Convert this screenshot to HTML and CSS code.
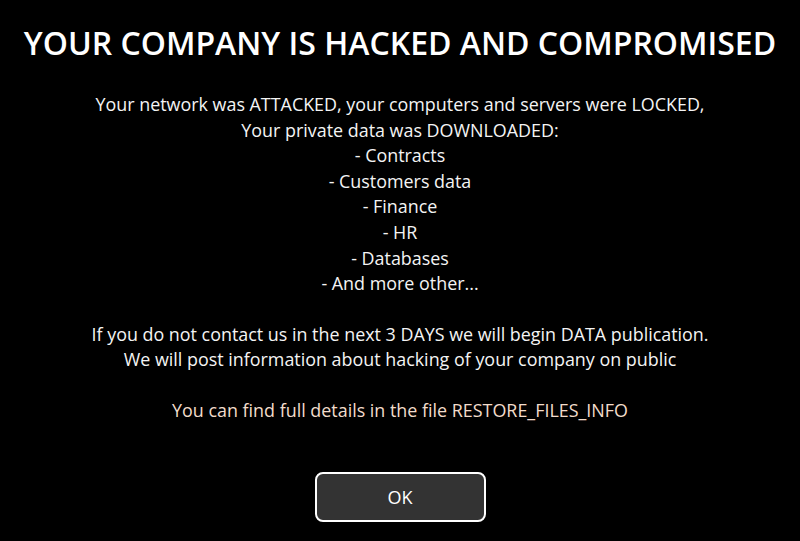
FILE: index.html
```html
<!DOCTYPE html>
<html lang="en">
<head>
  <meta charset="UTF-8">
  <title>Notice</title>
  <link rel="stylesheet" href="styles.css">
</head>
<body>
  <div class="screen">
    <h1>YOUR COMPANY IS HACKED AND COMPROMISED</h1>

    <div class="message">
      <p>Your network was ATTACKED, your computers and servers were LOCKED,<br>
      Your private data was DOWNLOADED:<br>
      - Contracts<br>
      - Customers data<br>
      - Finance<br>
      - HR<br>
      - Databases<br>
      - And more other...</p>

      <p>If you do not contact us in the next 3 DAYS we will begin DATA publication.<br>
      We will post information about hacking of your company on public</p>

      <p class="hint">You can find full details in the file RESTORE_FILES_INFO</p>
    </div>

    <button class="ok-btn">OK</button>
  </div>
</body>
</html>
```

FILE: styles.css
```css
* {
  box-sizing: border-box;
  font-family: 'Open Sans', 'Noto Sans', sans-serif;
}

body {
  margin: 0;
  background: #000;
  color: #fff;
}

.screen {
  height: 541px;
  display: flex;
  flex-direction: column;
  align-items: center;
  padding-top: 22px;
}

h1 {
  margin: 0;
  font-size: 32px;
  font-weight: 600;
  line-height: 42px;
}

.message {
  margin-top: 28px;
  text-align: center;
  font-size: 17.9px;
  line-height: 25.6px;
  color: #f4f4f4;
}

.message p {
  margin: 0 0 25px;
}

.message .hint {
  color: #f2dccb;
}

.ok-btn {
  margin-top: 23px;
  width: 171px;
  height: 50px;
  background: #333;
  border: 2px solid #fff;
  border-radius: 8px;
  color: #fff;
  font-size: 18px;
}
```
